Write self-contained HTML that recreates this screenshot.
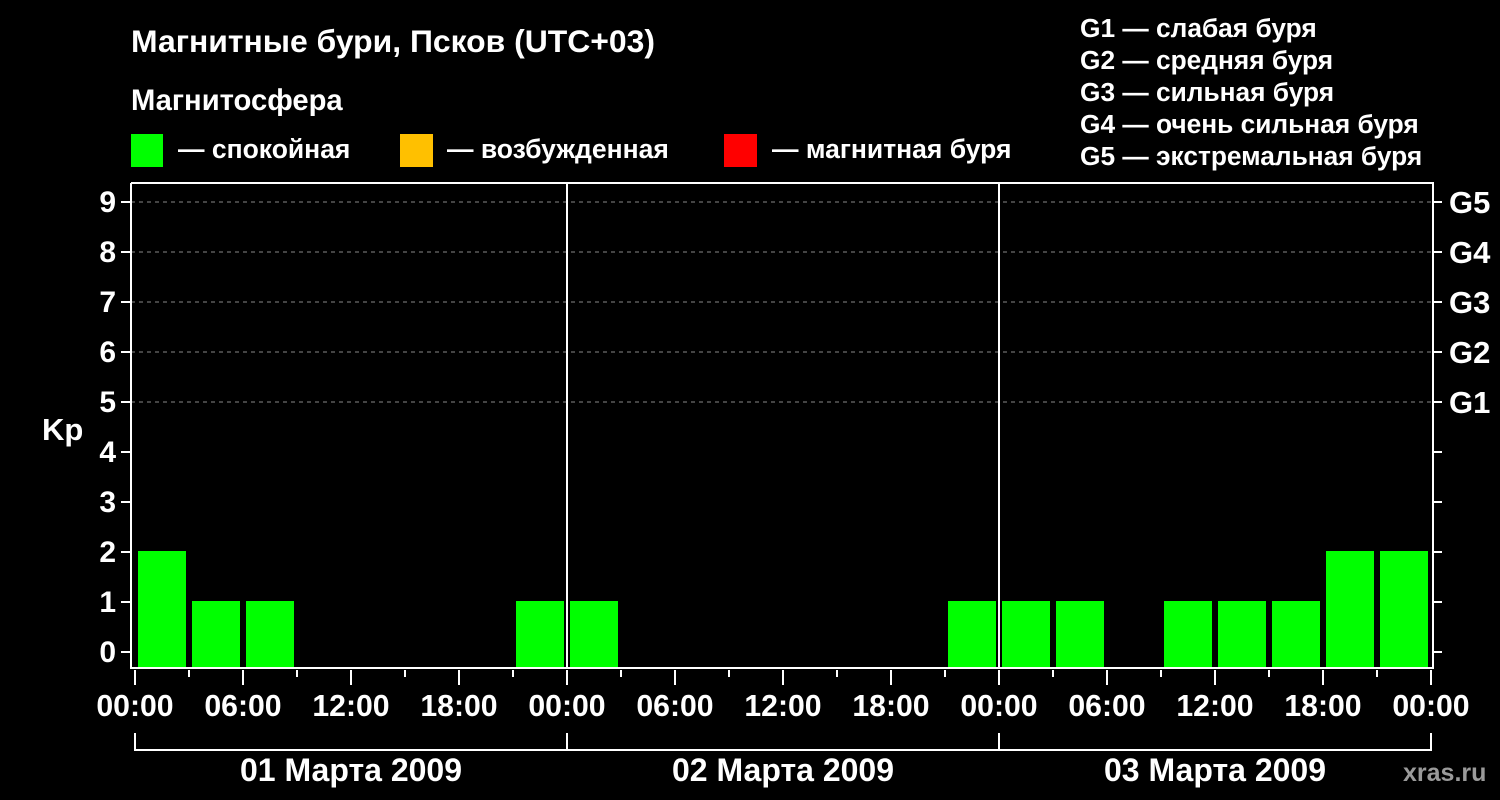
<!DOCTYPE html>
<html><head><meta charset="utf-8"><style>
html,body{margin:0;padding:0;background:#000;width:1500px;height:800px;overflow:hidden}
svg{display:block}
text{font-family:"Liberation Sans",sans-serif;font-weight:bold;fill:#fff}
</style></head><body>
<svg width="1500" height="800" viewBox="0 0 1500 800">
<text x="131" y="52" font-size="31.9">Магнитные бури, Псков (UTC+03)</text>
<text x="131" y="110" font-size="29.2">Магнитосфера</text>
<rect x="131" y="134" width="32" height="33" fill="#00ff00"/>
<text x="178" y="158" font-size="26.5">— спокойная</text>
<rect x="400" y="134" width="33" height="33" fill="#ffc000"/>
<text x="447" y="158" font-size="26.5">— возбужденная</text>
<rect x="724" y="134" width="33" height="33" fill="#ff0000"/>
<text x="772" y="158" font-size="26.5">— магнитная буря</text>
<g font-size="26.3">
<text x="1080" y="37">G1 — слабая буря</text>
<text x="1080" y="69">G2 — средняя буря</text>
<text x="1080" y="101">G3 — сильная буря</text>
<text x="1080" y="133">G4 — очень сильная буря</text>
<text x="1080" y="165">G5 — экстремальная буря</text>
</g>
<g stroke="#888" stroke-width="1" stroke-dasharray="4,4">
<line x1="131" y1="202" x2="1433" y2="202"/><line x1="131" y1="252" x2="1433" y2="252"/>
<line x1="131" y1="302" x2="1433" y2="302"/><line x1="131" y1="352" x2="1433" y2="352"/>
<line x1="131" y1="402" x2="1433" y2="402"/>
</g>
<g fill="#00ff00">
<rect x="138" y="551" width="48" height="117"/>
<rect x="192" y="601" width="48" height="67"/>
<rect x="246" y="601" width="48" height="67"/>
<rect x="516" y="601" width="48" height="67"/>
<rect x="570" y="601" width="48" height="67"/>
<rect x="948" y="601" width="48" height="67"/>
<rect x="1002" y="601" width="48" height="67"/>
<rect x="1056" y="601" width="48" height="67"/>
<rect x="1164" y="601" width="48" height="67"/>
<rect x="1218" y="601" width="48" height="67"/>
<rect x="1272" y="601" width="48" height="67"/>
<rect x="1326" y="551" width="48" height="117"/>
<rect x="1380" y="551" width="48" height="117"/>
</g>
<g stroke="#fff" stroke-width="2" fill="none">
<polyline points="131,183 131,668 1433,668 1433,183 131,183"/>
<line x1="567" y1="183" x2="567" y2="668"/><line x1="999" y1="183" x2="999" y2="668"/>
<line x1="121" y1="202" x2="131" y2="202"/><line x1="121" y1="252" x2="131" y2="252"/>
<line x1="121" y1="302" x2="131" y2="302"/><line x1="121" y1="352" x2="131" y2="352"/>
<line x1="121" y1="402" x2="131" y2="402"/><line x1="121" y1="452" x2="131" y2="452"/>
<line x1="121" y1="502" x2="131" y2="502"/><line x1="121" y1="552" x2="131" y2="552"/>
<line x1="121" y1="602" x2="131" y2="602"/><line x1="121" y1="652" x2="131" y2="652"/>
<line x1="1433" y1="202" x2="1442" y2="202"/><line x1="1433" y1="252" x2="1442" y2="252"/>
<line x1="1433" y1="302" x2="1442" y2="302"/><line x1="1433" y1="352" x2="1442" y2="352"/>
<line x1="1433" y1="402" x2="1442" y2="402"/><line x1="1433" y1="452" x2="1442" y2="452"/>
<line x1="1433" y1="502" x2="1442" y2="502"/><line x1="1433" y1="552" x2="1442" y2="552"/>
<line x1="1433" y1="602" x2="1442" y2="602"/><line x1="1433" y1="652" x2="1442" y2="652"/>
<line x1="135" y1="670" x2="135" y2="685"/><line x1="189" y1="670" x2="189" y2="677"/>
<line x1="243" y1="670" x2="243" y2="685"/><line x1="297" y1="670" x2="297" y2="677"/>
<line x1="351" y1="670" x2="351" y2="685"/><line x1="405" y1="670" x2="405" y2="677"/>
<line x1="459" y1="670" x2="459" y2="685"/><line x1="513" y1="670" x2="513" y2="677"/>
<line x1="567" y1="670" x2="567" y2="685"/><line x1="621" y1="670" x2="621" y2="677"/>
<line x1="675" y1="670" x2="675" y2="685"/><line x1="729" y1="670" x2="729" y2="677"/>
<line x1="783" y1="670" x2="783" y2="685"/><line x1="837" y1="670" x2="837" y2="677"/>
<line x1="891" y1="670" x2="891" y2="685"/><line x1="945" y1="670" x2="945" y2="677"/>
<line x1="999" y1="670" x2="999" y2="685"/><line x1="1053" y1="670" x2="1053" y2="677"/>
<line x1="1107" y1="670" x2="1107" y2="685"/><line x1="1161" y1="670" x2="1161" y2="677"/>
<line x1="1215" y1="670" x2="1215" y2="685"/><line x1="1269" y1="670" x2="1269" y2="677"/>
<line x1="1323" y1="670" x2="1323" y2="685"/><line x1="1377" y1="670" x2="1377" y2="677"/>
<line x1="1431" y1="670" x2="1431" y2="685"/>
<polyline points="135,733 135,750 1431,750 1431,733"/>
<line x1="567" y1="733" x2="567" y2="750"/><line x1="999" y1="733" x2="999" y2="750"/>
</g>
<g font-size="30" text-anchor="end">
<text x="116" y="212">9</text><text x="116" y="262">8</text><text x="116" y="312">7</text>
<text x="116" y="362">6</text><text x="116" y="412">5</text><text x="116" y="462">4</text>
<text x="116" y="512">3</text><text x="116" y="562">2</text><text x="116" y="612">1</text>
<text x="116" y="662">0</text>
</g>
<text x="42" y="440" font-size="31">Kp</text>
<g font-size="31">
<text x="1449" y="213">G5</text><text x="1449" y="263">G4</text><text x="1449" y="313">G3</text>
<text x="1449" y="363">G2</text><text x="1449" y="413">G1</text>
</g>
<g font-size="30.2" text-anchor="middle">
<text x="135" y="716">00:00</text><text x="243" y="716">06:00</text><text x="351" y="716">12:00</text>
<text x="459" y="716">18:00</text><text x="567" y="716">00:00</text><text x="675" y="716">06:00</text>
<text x="783" y="716">12:00</text><text x="891" y="716">18:00</text><text x="999" y="716">00:00</text>
<text x="1107" y="716">06:00</text><text x="1215" y="716">12:00</text><text x="1323" y="716">18:00</text>
<text x="1431" y="716">00:00</text>
<text x="351" y="781" font-size="32">01 Марта 2009</text>
<text x="783" y="781" font-size="32">02 Марта 2009</text>
<text x="1215" y="781" font-size="32">03 Марта 2009</text>
</g>
<text x="1403" y="781" font-size="25" style="fill:#9a9a9a">xras.ru</text>
</svg>
</body></html>
